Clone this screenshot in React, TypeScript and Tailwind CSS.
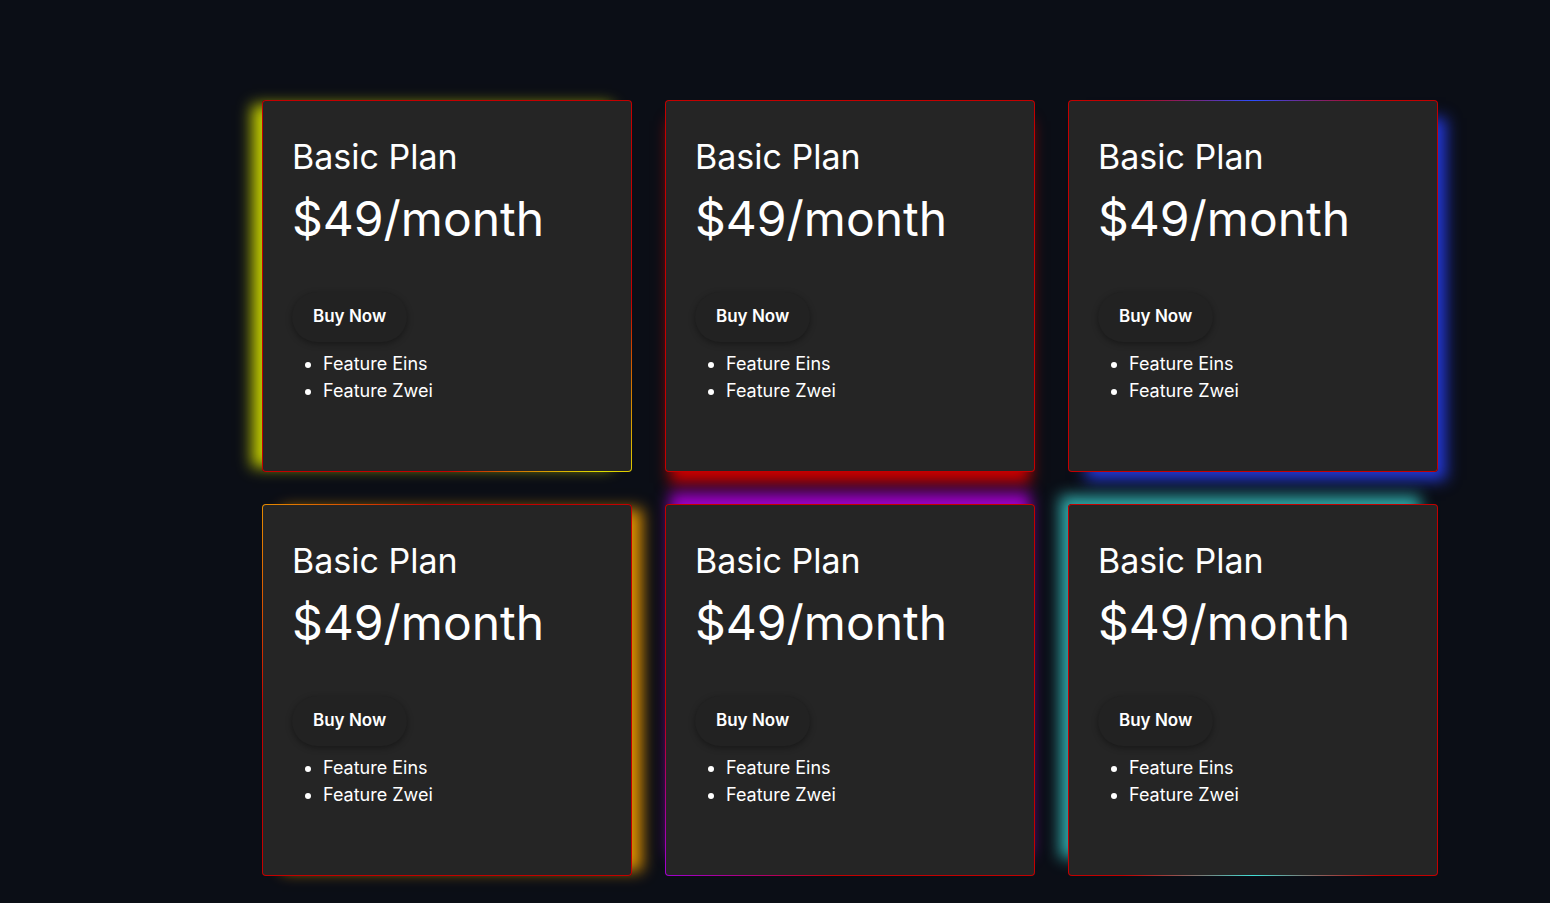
import React from "react";

type Plan = {
  glow: string;
  ring: string;
};

// One entry per card: coloured glow on one side + a border highlight.
const plans: Plan[] = [
  {
    glow: "shadow-[-15px_0_14px_-5px_#c2cc00]",
    ring: "bg-[conic-gradient(#c40000_0deg,#c40000_95deg,#e0e000_140deg,#c40000_180deg,#c40000_360deg)]",
  },
  {
    glow: "shadow-[0_16px_14px_-5px_#cc0000]",
    ring: "bg-[#c40000]",
  },
  {
    glow: "shadow-[13px_13px_14px_-5px_#2438d8]",
    ring: "bg-[conic-gradient(#2a4dff_0deg,#c40000_35deg,#c40000_325deg,#2a4dff_360deg)]",
  },
  {
    glow: "shadow-[15px_0_14px_-5px_#dc9000]",
    ring: "bg-[conic-gradient(#c40000_0deg,#c40000_265deg,#e68a00_315deg,#c40000_355deg,#c40000_360deg)]",
  },
  {
    glow: "shadow-[0_-16px_14px_-5px_#a000c8]",
    ring: "bg-[conic-gradient(#c40000_0deg,#c40000_185deg,#a000d0_225deg,#c40000_265deg,#c40000_360deg)]",
  },
  {
    glow: "shadow-[-13px_-13px_14px_-5px_#30aaaa]",
    ring: "bg-[conic-gradient(#c40000_0deg,#c40000_145deg,#40e0d8_180deg,#c40000_215deg,#c40000_360deg)]",
  },
];

function PlanCard({ glow, ring }: Plan) {
  return (
    <div className={`h-[372px] rounded-[4px] p-px ${ring} ${glow}`}>
      <div className="flex h-full flex-col rounded-[3px] bg-[#252525] px-[29px] pt-[35px] text-white">
        <h2 className="text-[34px] leading-[41px]">Basic Plan</h2>
        <p className="mt-[13px] text-[48px] leading-[58px]">$49/month</p>
        <button className="mt-[44px] h-[50px] self-start rounded-full bg-[#222222] px-[21px] text-[17px] font-semibold shadow-[0_2px_6px_rgba(0,0,0,0.35)]">
          Buy Now
        </button>
        <ul className="mt-[8px] list-disc pl-[31px] text-[18px] leading-[27px]">
          <li>Feature Eins</li>
          <li>Feature Zwei</li>
        </ul>
      </div>
    </div>
  );
}

export default function App() {
  return (
    <div
      className="min-h-screen bg-[#0b0e16] pt-[100px] pl-[262px]"
      style={{ fontFamily: "Inter, 'Noto Sans', sans-serif" }}
    >
      <div className="grid grid-cols-[370px_370px_370px] gap-x-[33px] gap-y-[32px]">
        {plans.map((p, i) => (
          <PlanCard key={i} {...p} />
        ))}
      </div>
    </div>
  );
}
